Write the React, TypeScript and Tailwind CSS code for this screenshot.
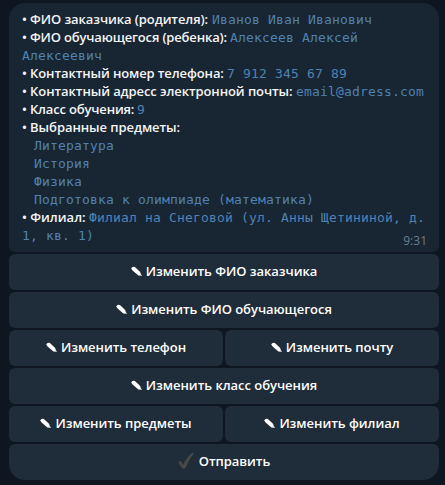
import type { ReactNode } from "react";

const labelFont = "font-['Open_Sans','Noto_Sans',sans-serif] font-semibold text-[13px]";
const monoFont = "font-['DejaVu_Sans_Mono',monospace] font-normal text-[13px] leading-none tracking-[0.174px] text-[#5083b1]";

function Line({ label, width, value, indent }: { label?: string; width?: string; value?: string; indent?: boolean }) {
  return (
    <div className={`${labelFont} h-[18px] leading-[18px] whitespace-pre ${indent ? "pl-3" : ""}`}>
      {label && <span className={`inline-block text-[#f5f5f5] ${width ?? ""}`}>{label}</span>}
      {value && <span className={monoFont}>{value}</span>}
    </div>
  );
}

function Pencil() {
  return (
    <svg className="mr-1 h-[11px] w-[11px] shrink-0" viewBox="0 0 11 11" fill="#fff">
      <path d="M.2 2.4.9 1.4 2.3.7 3.9 1.1 9.2 6 9.9 8.6 10.8 9 10.8 9.8 7.4 9.5 1.6 4.4Z" />
    </svg>
  );
}

function Check() {
  return (
    <svg className="mr-[5px] h-4 w-4 shrink-0" viewBox="0 0 16 16" fill="#484848">
      <path d="M.2 9.4C1.2 7.8 3.2 8 4 9.7l1.2 2C7.1 7.5 10.1 2.9 13.4.4c.8-.5 2.7-.5 2.3.4C12.3 5 9.9 9.8 7.7 14.6c-.5 1.4-3.2 1.6-3.9.2Z" />
    </svg>
  );
}

function Button({ children, icon = <Pencil />, className = "rounded-md" }: { children: ReactNode; icon?: ReactNode; className?: string }) {
  return (
    <button className={`${labelFont} flex h-9 min-w-0 flex-1 items-center justify-center bg-[#1f2c39] pb-0.5 leading-[18px] tracking-[-0.04px] whitespace-pre text-white ${className}`}>
      {icon}
      <span>{children}</span>
    </button>
  );
}

export default function App() {
  return (
    <main className="flex h-[485px] w-[445px] flex-col gap-0.5 overflow-hidden bg-[#0e1621] pt-[3px] pr-1.5 pl-[9px]">
      <section className="relative h-[249px] shrink-0 rounded-t-2xl rounded-b-md bg-[#182533] pt-[7px] pl-[13px]">
        <Line label="• ФИО заказчика (родителя):" width="w-[190px] tracking-[-0.09px]" value="Иванов Иван Иванович" />
        <Line label="• ФИО обучающегося (ребенка):" width="w-[208px] tracking-[-0.16px]" value="Алексеев Алексей" />
        <Line value="Алексеевич" />
        <Line label="• Контактный номер телефона:" width="w-[205px] tracking-[-0.11px]" value="7 912 345 67 89" />
        <Line label="• Контактный адресс электронной почты:" width="w-[274px] tracking-[-0.09px]" value="email@adress.com" />
        <Line label="• Класс обучения:" width="w-[115px] tracking-[-0.17px]" value="9" />
        <Line label="• Выбранные предметы:" width="tracking-[-0.07px]" />
        <Line indent value="Литература" />
        <Line indent value="История" />
        <Line indent value="Физика" />
        <Line indent value="Подготовка к олимпиаде (математика)" />
        <Line label="• Филиал:" width="w-[67px]" value="Филиал на Снеговой (ул. Анны Щетининой, д." />
        <Line value="1, кв. 1)" />
        <time className="absolute right-3 bottom-[3px] font-['Open_Sans',sans-serif] text-[12px] leading-4 text-[#6d7f8f]">9:31</time>
      </section>
      <div className="flex"><Button>Изменить ФИО заказчика</Button></div>
      <div className="flex"><Button>Изменить ФИО обучающегося</Button></div>
      <div className="flex gap-0.5">
        <Button>Изменить телефон</Button>
        <Button>Изменить почту</Button>
      </div>
      <div className="flex"><Button>Изменить класс обучения</Button></div>
      <div className="flex gap-0.5">
        <Button>Изменить предметы</Button>
        <Button>Изменить филиал</Button>
      </div>
      <div className="flex"><Button icon={<Check />} className="rounded-t-md rounded-b-2xl">Отправить</Button></div>
    </main>
  );
}
